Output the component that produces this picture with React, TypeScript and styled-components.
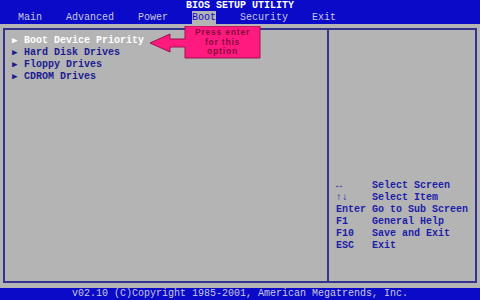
import React from "react";
import styled, { createGlobalStyle } from "styled-components";

const BLUE = "#0a0ac8";
const GRAY = "#b4b4b4";
const LINE = "#34348c";

const GlobalStyle = createGlobalStyle`
    body {
        margin: 0;
        background: ${GRAY};
    }
`

const menu = ["Main", "Advanced", "Power", "Boot", "Security", "Exit"];
const devices = ["Boot Device Priority", "Hard Disk Drives", "Floppy Drives", "CDROM Drives"];
const help = [
    ["\u2194", "Select Screen"],
    ["\u2191\u2193", "Select Item"],
    ["Enter", "Go to Sub Screen"],
    ["F1", "General Help"],
    ["F10", "Save and Exit"],
    ["ESC", "Exit"],
];

const Callout = () => (
    <CalloutBox>
        <svg width="112" height="34" viewBox="0 0 112 34">
            <path
                d="M0 17 L20 8 L20 13 L35 13 L35 0 L110 0 L110 32 L35 32 L35 21 L20 21 L20 26 Z"
                fill="#ff1a80"
                stroke="#a0104c"
                strokeWidth="1"
            />
        </svg>
        <CalloutText>Press enter<br />for this<br />option</CalloutText>
    </CalloutBox>
);

export default function App() {
    return (
        <Screen>
            <GlobalStyle />
            <Header>
                <Title>BIOS SETUP UTILITY</Title>
                <Menu>
                    {menu.map((m) => (
                        <MenuItem key={m} active={m === "Boot"}>{m}</MenuItem>
                    ))}
                </Menu>
            </Header>
            <Body>
                <Frame>
                    <MainPanel>
                        {devices.map((d, i) => (
                            <Item key={d} selected={i === 0}>
                                <Arrow>&#9654;</Arrow>
                                {d}
                            </Item>
                        ))}
                        <Callout />
                    </MainPanel>
                    <HelpPanel>
                        {help.map(([k, v]) => (
                            <HelpRow key={k}>
                                <HelpKey>{k}</HelpKey>
                                <span>{v}</span>
                            </HelpRow>
                        ))}
                    </HelpPanel>
                </Frame>
            </Body>
            <Footer>v02.10 (C)Copyright 1985-2001, American Megatrends, Inc.</Footer>
        </Screen>
    )
};

const Screen = styled.div`
    width: 480px;
    height: 300px;
    display: flex;
    flex-direction: column;
    font-family: "Liberation Mono", "DejaVu Sans Mono", monospace;
    font-size: 10px;
    font-weight: 700;
    background: ${GRAY};
`
const Header = styled.div`
    height: 24px;
    background: ${BLUE};
    display: flex;
    flex-direction: column;
`
const Title = styled.div`
    color: #ffffff;
    text-align: center;
    line-height: 11px;
    height: 11px;
`
const Menu = styled.div`
    display: flex;
    gap: 24px;
    padding-left: 18px;
    height: 13px;
`
const MenuItem = styled.div<{ active?: boolean }>`
    line-height: 13px;
    font-weight: 400;
    color: ${(p) => (p.active ? BLUE : "#c8c8dc")};
    background: ${(p) => (p.active ? GRAY : "transparent")};
`
const Body = styled.div`
    flex: 1;
    padding: 4px 3px 5px;
    display: flex;
`
const Frame = styled.div`
    flex: 1;
    display: grid;
    grid-template-columns: 1fr 146px;
    border: 2px solid ${LINE};
`
const MainPanel = styled.div`
    position: relative;
    padding: 5px 0 0 7px;
    border-right: 2px solid ${LINE};
`
const Item = styled.div<{ selected?: boolean }>`
    display: flex;
    align-items: center;
    line-height: 12px;
    color: ${(p) => (p.selected ? "#ffffff" : "#1c1c90")};
`
const Arrow = styled.span`
    font-size: 9px;
    width: 12px;
`
const CalloutBox = styled.div`
    position: absolute;
    left: 145px;
    top: -4px;
    width: 112px;
    height: 34px;
`
const CalloutText = styled.div`
    position: absolute;
    left: 35px;
    top: 2px;
    width: 75px;
    text-align: center;
    font-family: "Liberation Sans", Arial, sans-serif;
    font-size: 8.5px;
    font-weight: 700;
    letter-spacing: 0.8px;
    line-height: 9.5px;
    color: #8a0a3c;
`
const HelpPanel = styled.div`
    display: flex;
    flex-direction: column;
    justify-content: flex-end;
    padding: 0 0 29px 7px;
    color: #1e1ea8;
`
const HelpRow = styled.div`
    display: flex;
    line-height: 12px;
`
const HelpKey = styled.span`
    width: 36px;
`
const Footer = styled.div`
    height: 12px;
    background: ${BLUE};
    color: #c8c8dc;
    text-align: center;
    line-height: 12px;
    font-weight: 400;
`
